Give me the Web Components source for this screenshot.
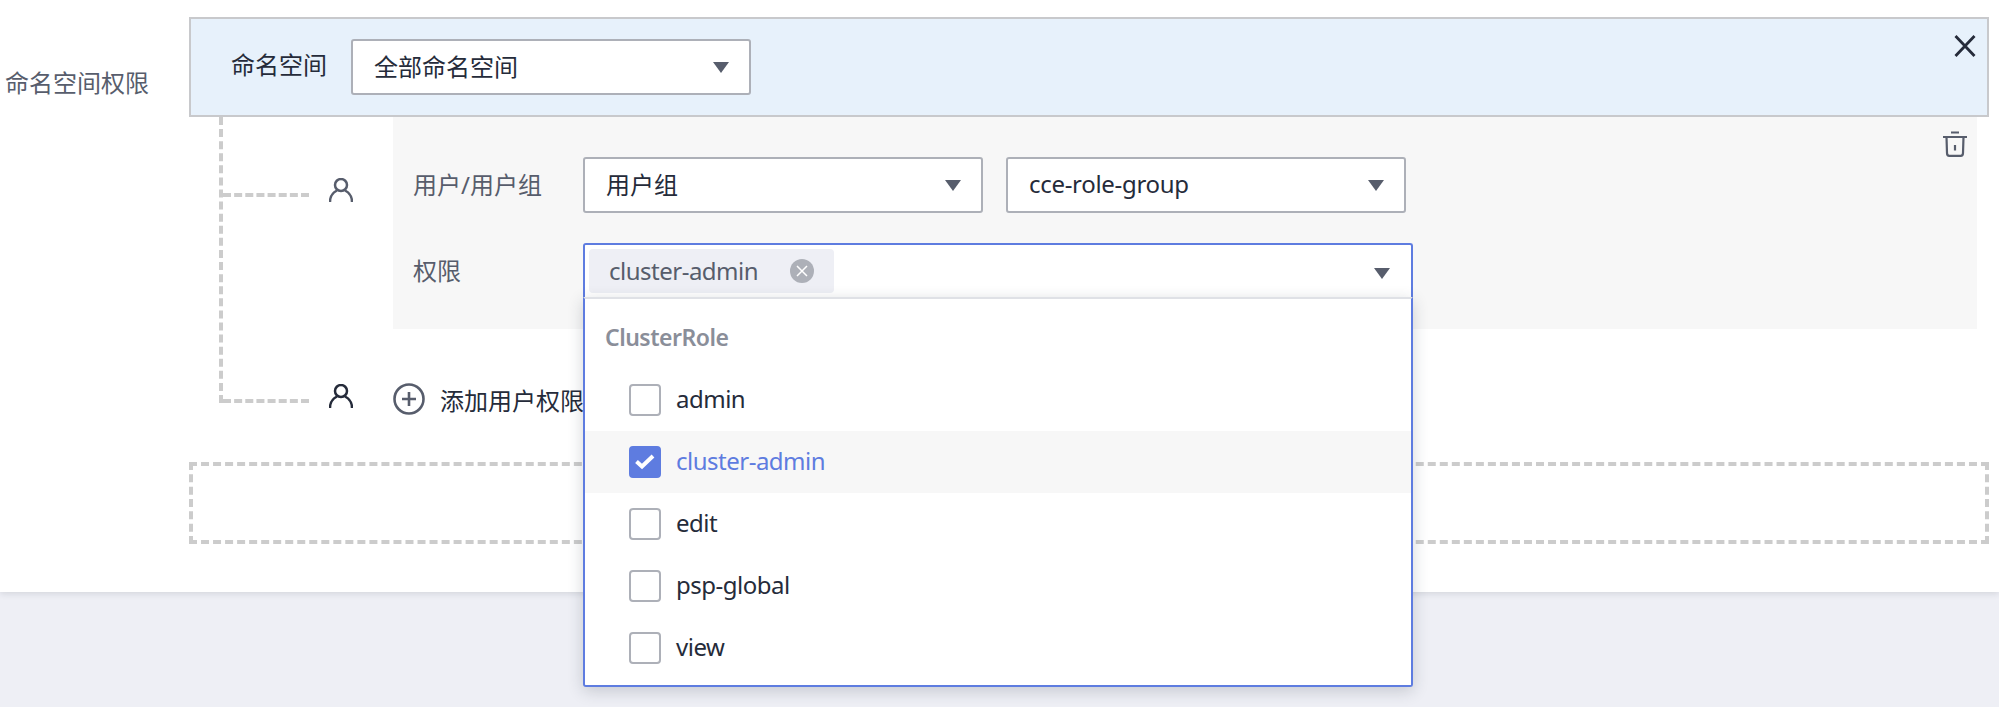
<!DOCTYPE html>
<html lang="zh">
<head>
<meta charset="utf-8">
<title>命名空间权限</title>
<style>
    html, body { margin: 0; padding: 0; background: #eeeff5; }
    body { font-family: "Noto Sans", "Noto Sans CJK SC", sans-serif; font-size: 24px; color: #252b3a; }
</style>
</head>
<body>
<perm-page></perm-page>

<script>
const CARET = `<svg width="16" height="11" viewBox="0 0 16 11"><path d="M0 0H16L8 11Z" fill="#575d6c"/></svg>`;
const PERSON = `<svg width="24" height="24" viewBox="0 0 24 24" fill="none" stroke="currentColor" stroke-width="2.5"><circle cx="12" cy="7" r="6"/><path d="M1 24C1 18.500 4 14.500 8 12.500M23 24C23 18.500 20 14.500 16 12.500"/></svg>`;

class UiSelect extends HTMLElement {
    constructor() {
        super();
        this.attachShadow({ mode: 'open' });
        this.shadowRoot.innerHTML = `
            <style>
                :host {
                    display: flex;
                    align-items: center;
                    justify-content: space-between;
                    box-sizing: border-box;
                    height: 56px;
                    padding: 0 20px 0 21px;
                    background: #fff;
                    border: 2px solid #adb0b8;
                    border-radius: 3px;
                    color: #252b3a;
                }
                span { padding-bottom: 3px; }
                svg { display: block; }
            </style>
            <span><slot></slot></span>
            ${CARET}
        `;
    }
}
customElements.define('ui-select', UiSelect);

class CheckItem extends HTMLElement {
    constructor() {
        super();
        this.attachShadow({ mode: 'open' });
        this.shadowRoot.innerHTML = `
            <style>
                :host {
                    display: flex;
                    align-items: center;
                    gap: 15px;
                    height: 62px;
                    padding-left: 44px;
                    color: #252b3a;
                    letter-spacing: -.5px;
                }
                :host([checked]) { background: #f7f7f7; color: #5e7ce0; }
                .text { padding-bottom: 3px; }
                .box {
                    box-sizing: border-box;
                    width: 32px;
                    height: 32px;
                    background: #fff;
                    border: 2px solid #adb0b8;
                    border-radius: 4px;
                }
                .box svg { display: none; }
                :host([checked]) .box { background: #5e7ce0; border-color: #5e7ce0; }
                :host([checked]) .box svg { display: block; }
            </style>
            <span class="box"><svg width="28" height="28" viewBox="0 0 28 28" fill="none" stroke="#fff" stroke-width="4"><path d="M5.500 13.500L11 18.500L22 8"/></svg></span>
            <span class="text"><slot></slot></span>
        `;
    }
}
customElements.define('check-item', CheckItem);

class MultiSelect extends HTMLElement {
    constructor() {
        super();
        this.attachShadow({ mode: 'open' });
        this.shadowRoot.innerHTML = `
            <style>
                :host {
                    display: block;
                    position: relative;
                    width: 830px;
                    height: 54px;
                    box-sizing: border-box;
                    background: #fff;
                    border: 2px solid #5e7ce0;
                    border-bottom: 0;
                    border-radius: 3px 3px 0 0;
                }
                .bar {
                    display: flex;
                    align-items: center;
                    justify-content: space-between;
                    height: 52px;
                    box-sizing: border-box;
                    padding: 0 21px 0 4px;
                }
                .tag {
                    display: flex;
                    align-items: center;
                    justify-content: space-between;
                    box-sizing: border-box;
                    width: 245px;
                    height: 44px;
                    padding: 0 20px;
                    background: #eeeff5;
                    border-radius: 4px;
                    color: #575d6c;
                    letter-spacing: -.5px;
                }
                .tag span { padding-bottom: 1px; }
                .bar > svg { display: block; margin-top: 5px; }
                .tag svg { display: block; }
                .panel {
                    position: absolute;
                    z-index: 5;
                    top: 52px;
                    left: -2px;
                    right: -2px;
                    box-sizing: border-box;
                    height: 390px;
                    background: #fff;
                    border: 2px solid #5e7ce0;
                    border-top: 2px solid #dfe1e6;
                    border-radius: 0 0 3px 3px;
                    box-shadow: 0 4px 16px rgba(37, 43, 58, .2);
                }
                .group {
                    display: flex;
                    align-items: center;
                    height: 70px;
                    padding: 6px 0 0 20px;
                    box-sizing: border-box;
                    font-size: 23px;
                    letter-spacing: -.5px;
                    font-weight: 600;
                    color: #8a8e99;
                }
            </style>
            <div class="bar">
                <div class="tag">
                    <span>cluster-admin</span>
                    <svg width="24" height="24" viewBox="0 0 24 24"><circle cx="12" cy="12" r="12" fill="#adb0b8"/><path d="M7 7L17 17M17 7L7 17" stroke="#fff" stroke-width="1.500"/></svg>
                </div>
                ${CARET}
            </div>
            <div class="panel">
                <div class="group">ClusterRole</div>
                <slot></slot>
            </div>
        `;
    }
}
customElements.define('multi-select', MultiSelect);

class FormRow extends HTMLElement {
    constructor() {
        super();
        this.attachShadow({ mode: 'open' });
        this.shadowRoot.innerHTML = `
            <style>
                :host {
                    display: flex;
                    align-items: center;
                    color: #575d6c;
                }
                .label { width: 170px; flex: none; padding-bottom: var(--label-lift, 3px); }
            </style>
            <span class="label"><slot name="label"></slot></span>
            <slot></slot>
        `;
    }
}
customElements.define('form-row', FormRow);

// one branch of the dashed tree: connector, person icon, then the content
class TreeRow extends HTMLElement {
    constructor() {
        super();
        this.attachShadow({ mode: 'open' });
        this.shadowRoot.innerHTML = `
            <style>
                :host {
                    display: flex;
                    align-items: flex-start;
                    color: #575d6c;
                }
                :host([last]) { color: #252b3a; }
                .line {
                    flex: none;
                    box-sizing: border-box;
                    width: 86px;
                    height: var(--line-height, 80px);
                    border-bottom: 4px dashed #ccc;
                }
                .person {
                    flex: none;
                    width: 24px;
                    height: 24px;
                    margin: var(--person-top, 61px) 40px 0 20px;
                }
                .person svg { display: block; }
                .body { flex: 1; min-width: 0; }
            </style>
            <div class="line"></div>
            <div class="person">${PERSON}</div>
            <div class="body"><slot></slot></div>
        `;
    }
}
customElements.define('tree-row', TreeRow);

class UserCard extends HTMLElement {
    constructor() {
        super();
        this.attachShadow({ mode: 'open' });
        this.shadowRoot.innerHTML = `
            <style>
                :host {
                    display: flex;
                    flex-direction: column;
                    gap: 30px;
                    position: relative;
                    box-sizing: border-box;
                    width: 1584px;
                    height: 212px;
                    padding: 40px 0 0 20px;
                    background: #f7f7f7;
                }
                .del { position: absolute; top: 14px; right: 10px; display: block; }
            </style>
            <svg class="del" width="24" height="26" viewBox="0 0 24 26" fill="none" stroke="#575d6c" stroke-width="2.2"><path d="M8 1.500H16M0 6H24M3.500 6L4 22C4 23.700 4.800 24.800 6.300 24.800H17.700C19.200 24.800 20 23.700 20 22L20.500 6M12 14V19.500"/></svg>
            <slot></slot>
        `;
    }
}
customElements.define('user-card', UserCard);

class NamespaceBar extends HTMLElement {
    constructor() {
        super();
        this.attachShadow({ mode: 'open' });
        this.shadowRoot.innerHTML = `
            <style>
                :host {
                    display: flex;
                    align-items: flex-start;
                    gap: 24px;
                    position: relative;
                    box-sizing: border-box;
                    height: 100px;
                    padding: 20px 0 0 40px;
                    background: #e7f1fb;
                    border: 2px solid #c8c9cc;
                    color: #252b3a;
                }
                .name { line-height: 52px; }
                ui-select { width: 400px; }
                .close { position: absolute; top: 16px; right: 11px; display: block; }
            </style>
            <span class="name">命名空间</span>
            <ui-select>全部命名空间</ui-select>
            <svg class="close" width="22" height="22" viewBox="0 0 22 22" stroke="#252b3a" stroke-width="2.800"><path d="M1.500 1L20.500 21M20.500 1L1.500 21"/></svg>
        `;
    }
}
customElements.define('namespace-bar', NamespaceBar);

class PermPage extends HTMLElement {
    constructor() {
        super();
        this.attachShadow({ mode: 'open' });
        this.shadowRoot.innerHTML = `
            <style>
                :host {
                    display: block;
                    height: 707px;
                    overflow: hidden;
                    background: #eeeff5;
                }
                .sheet {
                    display: grid;
                    grid-template-columns: 189px 1800px;
                    box-sizing: border-box;
                    height: 592px;
                    padding-top: 17px;
                    background: #fff;
                    box-shadow: 0 2px 6px rgba(37, 43, 58, .12);
                }
                .side { padding: 47px 0 0 5px; color: #575d6c; }
                .tree {
                    box-sizing: border-box;
                    width: 1788px;
                    height: 286px;
                    margin-left: 30px;
                    border-left: 4px dashed #ccc;
                }
                .add { display: flex; align-items: center; gap: 15px; height: 32px; margin-top: 54px; white-space: nowrap; color: #252b3a; }
                .add svg { display: block; flex: none; }
                .empty {
                    box-sizing: border-box;
                    height: 82px;
                    margin-top: 59px;
                    border: 4px dashed #ccc;
                }
                .two { display: flex; gap: 23px; }
                .two ui-select { width: 400px; }
            </style>
            <div class="sheet">
                <div class="side">命名空间权限</div>
                <div>
                    <namespace-bar></namespace-bar>
                    <div class="tree">
                        <tree-row>
                            <user-card>
                                <form-row>
                                    <span slot="label">用户/用户组</span>
                                    <div class="two">
                                        <ui-select>用户组</ui-select>
                                        <ui-select style="letter-spacing: -.3px">cce-role-group</ui-select>
                                    </div>
                                </form-row>
                                <form-row style="--label-lift: 1px">
                                    <span slot="label">权限</span>
                                    <multi-select>
                                        <check-item>admin</check-item>
                                        <check-item checked>cluster-admin</check-item>
                                        <check-item>edit</check-item>
                                        <check-item>psp-global</check-item>
                                        <check-item>view</check-item>
                                    </multi-select>
                                </form-row>
                            </user-card>
                        </tree-row>
                        <tree-row last style="--line-height: 74px; --person-top: 55px">
                            <div class="add">
                                <svg width="32" height="32" viewBox="0 0 32 32" fill="none" stroke="#575d6c" stroke-width="2.600"><circle cx="16" cy="16" r="14.500"/><path d="M9 16H23M16 9V23"/></svg>
                                <span>添加用户权限</span>
                            </div>
                        </tree-row>
                    </div>
                    <div class="empty"></div>
                </div>
            </div>
        `;
    }
}
customElements.define('perm-page', PermPage);
</script>
</body>
</html>
